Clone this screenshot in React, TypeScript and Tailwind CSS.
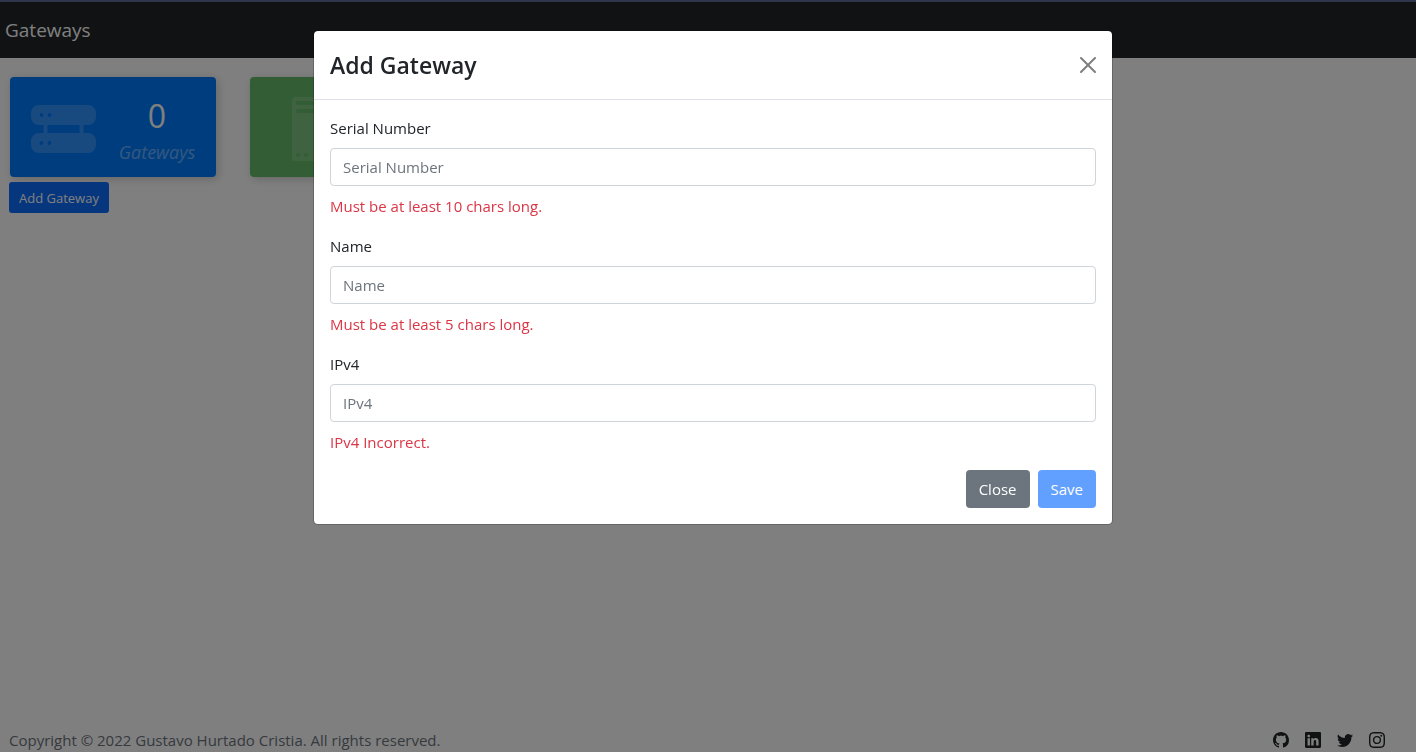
import { useState } from "react";
import type { ReactNode } from "react";
import { BsGithub, BsInstagram, BsLinkedin, BsTwitter } from "react-icons/bs";

function GatewayIcon() {
  return (
    <svg width="65" height="50" viewBox="0 0 65 50" fill="#fff" fillOpacity="0.2" aria-hidden="true">
      <path
        fillRule="evenodd"
        d="M8 1h49a8 8 0 0 1 8 8v4a8 8 0 0 1-8 8H52.5v8h4.5a8 8 0 0 1 8 8v4a8 8 0 0 1-8 8H8a8 8 0 0 1-8-8v-4a8 8 0 0 1 8-8h4.5v-8H8a8 8 0 0 1-8-8V9a8 8 0 0 1 8-8ZM16.5 21v8h32v-8h-32ZM10.500 9a2 2 0 1 0 0 4a2 2 0 0 0 0-4ZM18.500 9a2 2 0 1 0 0 4a2 2 0 0 0 0-4ZM10.500 37a2 2 0 1 0 0 4a2 2 0 0 0 0-4ZM18.500 37a2 2 0 1 0 0 4a2 2 0 0 0 0-4Z"
      />
    </svg>
  );
}

function DeviceIcon() {
  return (
    <svg width="56" height="64" viewBox="-16 0 56 64" fill="#fff" fillOpacity="0.16" aria-hidden="true">
      <path
        fillRule="evenodd"
        d="M3 0h34a3 3 0 0 1 3 3v58a3 3 0 0 1-3 3H3a3 3 0 0 1-3-3V3a3 3 0 0 1 3-3ZM6 4a2 2 0 0 0 0 4h28a2 2 0 0 0 0-4ZM6 12a2 2 0 0 0 0 4h28a2 2 0 0 0 0-4ZM6 56a2 2 0 1 0 0 4a2 2 0 0 0 0-4ZM14 56a2 2 0 1 0 0 4a2 2 0 0 0 0-4Z"
      />
    </svg>
  );
}

function StatCard({ icon, color, children }: { icon: ReactNode; color: string; children?: ReactNode }) {
  return (
    <div className={`flex h-[100px] w-[206px] items-center rounded shadow-[2px_2px_10px_rgba(0,0,0,0.2)] ${color}`}>
      <div className="flex w-[107px] justify-center pt-1">{icon}</div>
      {children}
    </div>
  );
}

function Field({ id, label, error }: { id: string; label: string; error: string }) {
  return (
    <div className="mb-4">
      <label htmlFor={id} className="mb-2 block">
        {label}
      </label>
      <input
        id={id}
        type="text"
        placeholder={label}
        aria-describedby={`${id}-error`}
        className="mb-2 block h-[38px] w-full rounded border border-[#ced4da] bg-white px-3 placeholder:text-[#6c757d]"
      />
      <p id={`${id}-error`} className="text-[#dc3545]">
        {error}
      </p>
    </div>
  );
}

const socialLinks = [
  { name: "GitHub", Icon: BsGithub },
  { name: "LinkedIn", Icon: BsLinkedin },
  { name: "Twitter", Icon: BsTwitter },
  { name: "Instagram", Icon: BsInstagram },
];

function AddGatewayDialog({ onClose }: { onClose: () => void }) {
  return (
    <div className="fixed inset-0 top-0.5 overflow-y-auto bg-black/50 py-7 pl-2.5">
      <div
        role="dialog"
        aria-modal="true"
        aria-labelledby="dialog-title"
        className="mx-auto max-w-[800px] rounded-[5px] border border-black/20 bg-white bg-clip-padding"
      >
        <div className="flex items-center justify-between border-b border-[#dee2e6] p-4">
          <h2 id="dialog-title" className="text-[23px] leading-9 font-semibold">
            Add Gateway
          </h2>
          <button type="button" aria-label="Dismiss" onClick={onClose} className="opacity-50">
            <svg width="16" height="16" viewBox="0 0 16 16" aria-hidden="true">
              <path d="M.293.293a1 1 0 0 1 1.414 0L8 6.586 14.293.293a1 1 0 1 1 1.414 1.414L9.414 8l6.293 6.293a1 1 0 0 1-1.414 1.414L8 9.414l-6.293 6.293a1 1 0 0 1-1.414-1.414L6.586 8 .293 1.707a1 1 0 0 1 0-1.414z" />
            </svg>
          </button>
        </div>
        <form className="p-4" onSubmit={(event) => event.preventDefault()}>
          <Field id="serial" label="Serial Number" error="Must be at least 10 chars long." />
          <Field id="name" label="Name" error="Must be at least 5 chars long." />
          <Field id="ipv4" label="IPv4" error="IPv4 Incorrect." />
          <div className="flex justify-end gap-2">
            <button type="button" onClick={onClose} className="h-[38px] rounded bg-[#6c757d] px-[13px] text-white">
              Close
            </button>
            <button type="submit" disabled className="h-[38px] rounded bg-[#0d6efd] px-[13px] text-white opacity-65">
              Save
            </button>
          </div>
        </form>
      </div>
    </div>
  );
}

export default function App() {
  const [open, setOpen] = useState(true);
  return (
    <div className="flex min-h-screen flex-col bg-white font-['Open_Sans','Noto_Sans',sans-serif] text-[15px] leading-6 text-[#212529]">
      <div className="h-0.5 bg-[#2f354b]" />
      <header className="flex h-14 items-center bg-[#212529] px-[5px]">
        <a href="#" className="text-[19px] leading-7 text-white">
          Gateways
        </a>
      </header>
      <main className="grow px-[9px] pt-[19px]">
        <div className="mb-[5px] flex gap-[34px] pl-px">
          <StatCard icon={<GatewayIcon />} color="bg-[#007bff]">
            <div className="w-20 pt-3.5 text-center text-white">
              <div className="text-[32px] leading-9">0</div>
              <div className="text-[18px] leading-9 italic opacity-40">Gateways</div>
            </div>
          </StatCard>
          <StatCard icon={<DeviceIcon />} color="bg-[#66bb6a]" />
        </div>
        <button
          type="button"
          onClick={() => setOpen(true)}
          className="h-[31px] rounded-[3px] bg-[#0d6efd] px-2.5 text-[13px] text-white"
        >
          Add Gateway
        </button>
      </main>
      <footer className="flex items-center justify-between pr-[31px] pl-[9px]">
        <p className="text-[#6c757d]">Copyright © 2022 Gustavo Hurtado Cristia. All rights reserved.</p>
        <nav className="flex gap-4">
          {socialLinks.map(({ name, Icon }) => (
            <a key={name} href="#" aria-label={name}>
              <Icon size={16} />
            </a>
          ))}
        </nav>
      </footer>
      {open && <AddGatewayDialog onClose={() => setOpen(false)} />}
    </div>
  );
}
